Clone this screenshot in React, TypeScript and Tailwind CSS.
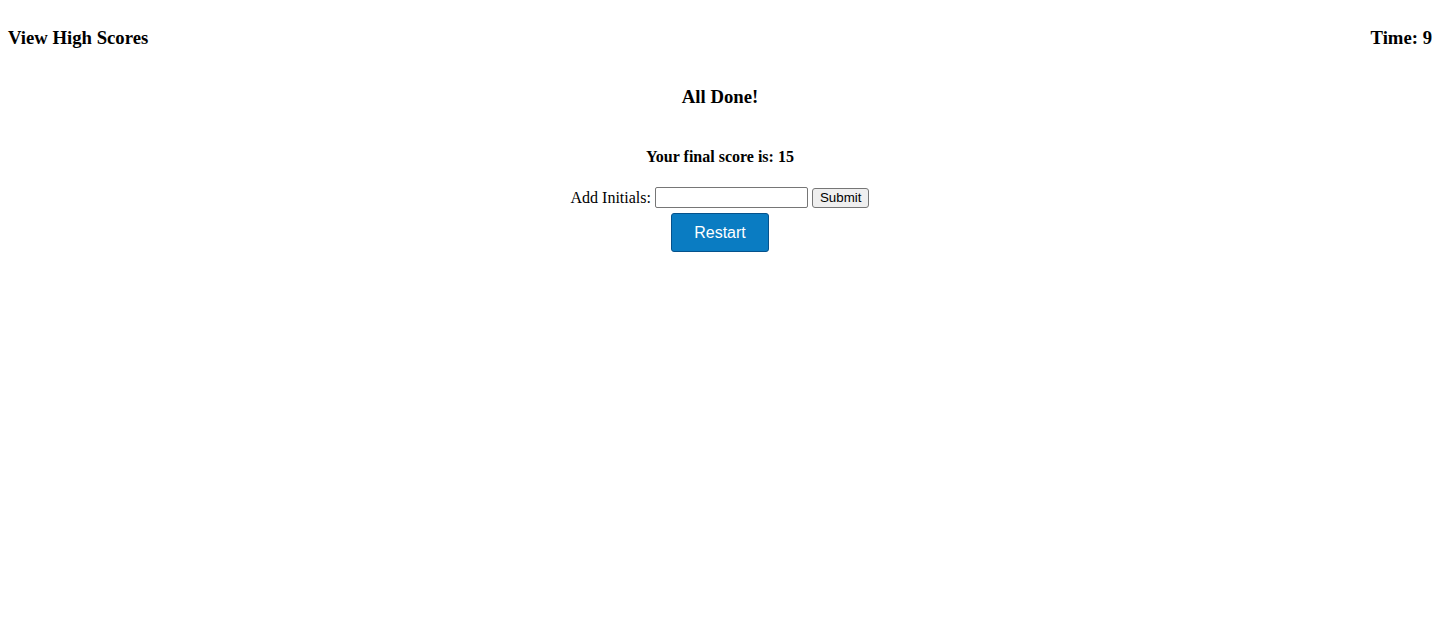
const serif = { fontFamily: '"Liberation Serif", "Times New Roman", serif' };

const Header = ({ time }: { time: number }) => {
  return (
    <header className="flex justify-between px-2 pt-2">
      <h3 className="my-[18.72px] text-[18.72px] font-bold leading-[normal]">
        View High Scores
      </h3>
      <h3 className="my-[18.72px] text-[18.72px] font-bold leading-[normal]">
        Time: {time}
      </h3>
    </header>
  );
};

const AllDone = ({ score }: { score: number }) => {
  return (
    <section className="flex flex-col items-center text-center">
      <h3 className="mt-[18.5px] text-[18.72px] font-bold leading-[normal]">
        All Done!
      </h3>
      <h4 className="mt-[40.5px] text-base font-bold leading-[normal]">
        Your final score is: {score}
      </h4>
      <form className="mt-[21px] flex items-center gap-1 text-base leading-[normal]">
        <label htmlFor="initials">Add Initials:</label>
        <input
          id="initials"
          type="text"
          className="h-[21px] w-[153px] rounded-[2px] border border-[#767676] bg-white px-[2px] text-[13.33px]"
        />
        <button
          type="button"
          className="h-[20px] rounded-[3px] border border-[#767676] bg-[#efefef] px-[7px] text-[13.33px] leading-none text-black"
          style={{ fontFamily: '"Liberation Sans", Arial, sans-serif' }}
        >
          Submit
        </button>
      </form>
      <button
        type="button"
        className="mt-[5px] h-[39px] w-[98px] rounded-[3px] border border-[#05528c] bg-[#0a7cc2] text-base text-white"
        style={{ fontFamily: '"Liberation Sans", Arial, sans-serif' }}
      >
        Restart
      </button>
    </section>
  );
};

export default function App() {
  return (
    <div className="min-h-[629px] bg-white text-black" style={serif}>
      <Header time={9} />
      <AllDone score={15} />
    </div>
  );
}
